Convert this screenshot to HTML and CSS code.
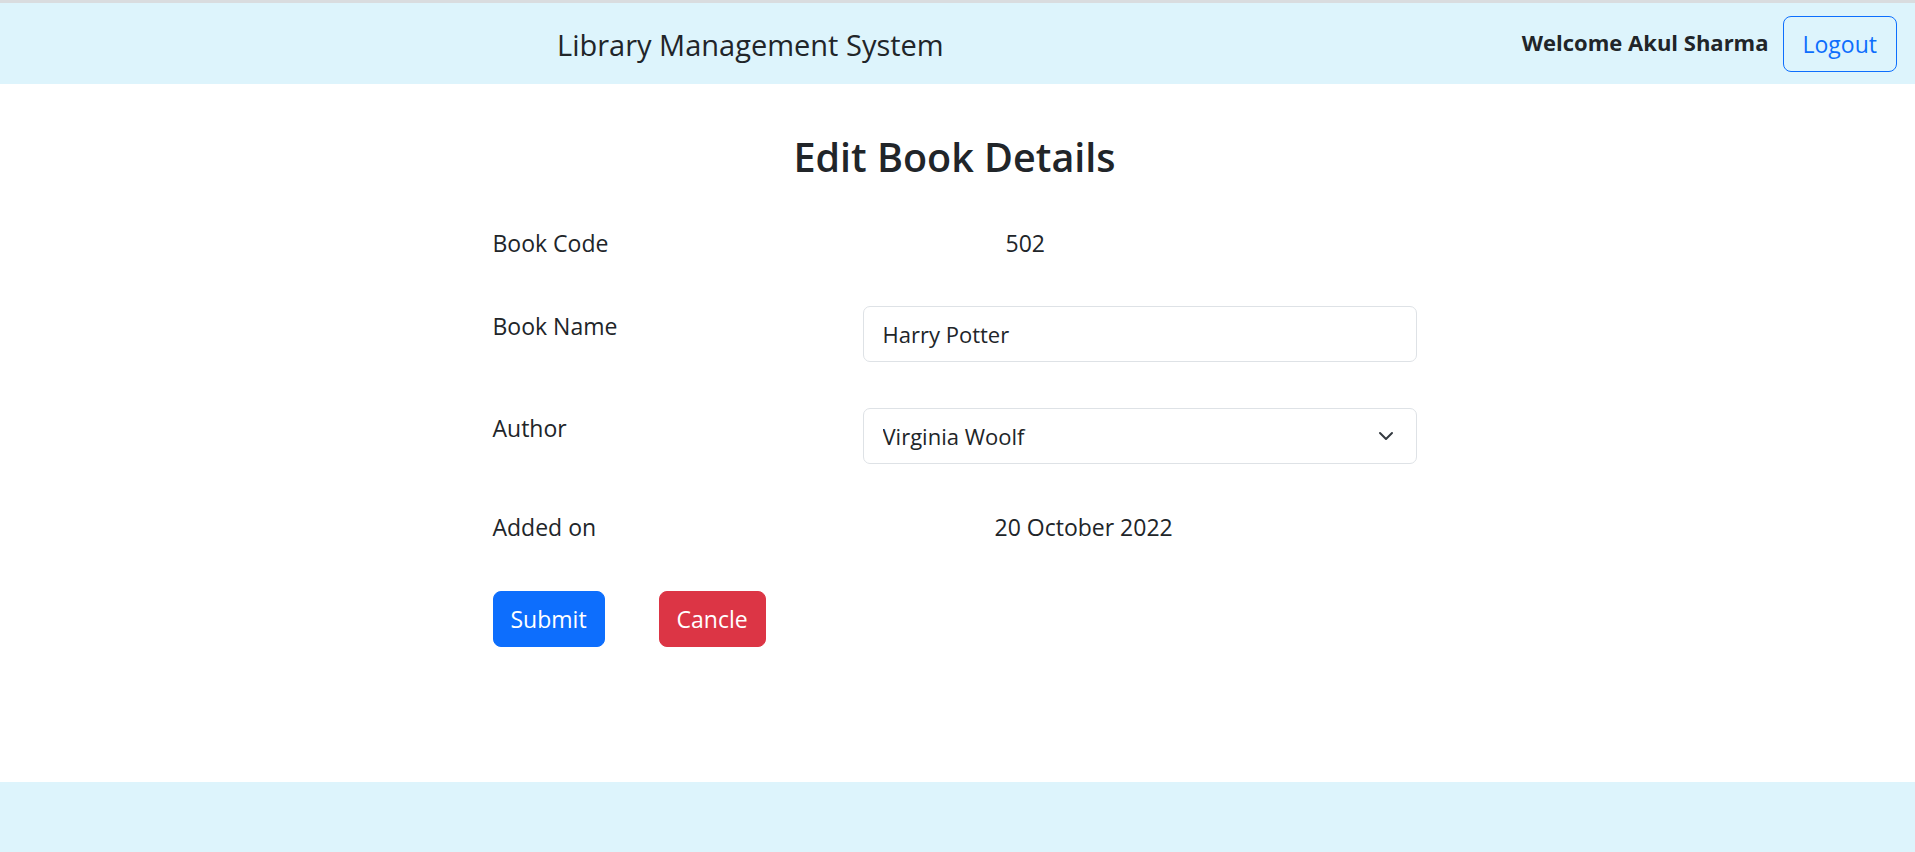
FILE: index.html
```html
<!DOCTYPE html>
<html lang="en">
<head>
<meta charset="utf-8">
<title>Library Management System</title>
<link rel="stylesheet" href="styles.css">
</head>
<body>
<header class="topbar">
  <div class="brand">Library Management System</div>
  <div class="user">
    <span class="welcome">Welcome Akul Sharma</span>
    <button class="btn btn-outline" type="button">Logout</button>
  </div>
</header>
<main class="content">
  <h2 class="page-title">Edit Book Details</h2>
  <form class="book-form">
    <div class="form-row">
      <span class="label">Book Code</span>
      <span class="value value-code">502</span>
    </div>
    <div class="form-row">
      <label class="label label-top" for="bookName">Book Name</label>
      <input class="field" id="bookName" type="text" value="Harry Potter">
    </div>
    <div class="form-row">
      <label class="label label-top" for="author">Author</label>
      <div class="select-wrap">
        <select class="field select" id="author">
          <option>Virginia Woolf</option>
        </select>
        <svg class="chevron" viewBox="0 0 16 16" width="16" height="16" aria-hidden="true"><path d="m2 5 6 6 6-6" fill="none" stroke="#343a40" stroke-width="2" stroke-linecap="round" stroke-linejoin="round"/></svg>
      </div>
    </div>
    <div class="form-row">
      <span class="label">Added on</span>
      <span class="value value-date">20 October 2022</span>
    </div>
    <div class="actions">
      <button class="btn btn-form btn-primary" type="button">Submit</button>
      <button class="btn btn-form btn-danger" type="button">Cancle</button>
    </div>
  </form>
</main>
<footer class="footer"></footer>
</body>
</html>
```
FILE: styles.css
```css
* { box-sizing: border-box; }

html, body { margin: 0; padding: 0; }

body {
  font-family: "Open Sans", "Noto Sans", "Liberation Sans", sans-serif;
  color: #212529;
  background: #fff;
  min-height: 100vh;
  display: flex;
  flex-direction: column;
}

.topbar {
  height: 84px;
  border-top: 3px solid #d9dcdf;
  background: #ddf4fc;
  display: flex;
  align-items: center;
  justify-content: space-between;
  padding: 0 18px 0 557px;
}

.brand {
  font-size: 29px;
  font-weight: 500;
  line-height: 1.2;
  margin-top: 4px;
}

.user {
  display: flex;
  align-items: center;
  gap: 14px;
}

.welcome {
  font-size: 22px;
  font-weight: 700;
  padding-bottom: 3px;
}

.btn {
  font-family: inherit;
  font-size: 23px;
  line-height: 34px;
  padding: 10px 19px;
  border: 1px solid transparent;
  border-radius: 8px;
  cursor: pointer;
}

.btn-form {
  padding: 10px 17px;
}

.btn-outline {
  background: transparent;
  color: #0d6efd;
  border-color: #0d6efd;
}

.btn-primary {
  background: #0d6efd;
  color: #fff;
  border-color: #0d6efd;
}

.btn-danger {
  background: #dc3545;
  color: #fff;
  border-color: #dc3545;
}

.content {
  flex: 1;
  width: 924px;
  margin-left: calc(50% - 465px);
}

.page-title {
  margin: 50px 0 44.5px;
  text-align: center;
  font-size: 39.5px;
  font-weight: 600;
  line-height: 46px;
}

.book-form {
  display: flex;
  flex-direction: column;
  gap: 45.5px;
}

.form-row {
  display: grid;
  grid-template-columns: 370px 554px;
  align-items: start;
}

.label, .value {
  font-size: 23px;
  line-height: 36px;
}

.label-top { padding-top: 2px; }

.value-code { padding-left: 143px; }
.value-date { padding-left: 132px; }

.field {
  font-family: inherit;
  font-size: 22px;
  line-height: 34px;
  color: #212529;
  height: 56px;
  width: 100%;
  padding: 10px 19px;
  border: 1px solid #dee2e6;
  border-radius: 7px;
  background: #fff;
  outline: none;
}

.select-wrap { position: relative; }

.select {
  appearance: none;
  -webkit-appearance: none;
}

.chevron {
  position: absolute;
  right: 23px;
  top: 20px;
  pointer-events: none;
}

.actions {
  display: flex;
  gap: 54px;
}

.footer {
  height: 70px;
  background: #ddf4fc;
}
```
